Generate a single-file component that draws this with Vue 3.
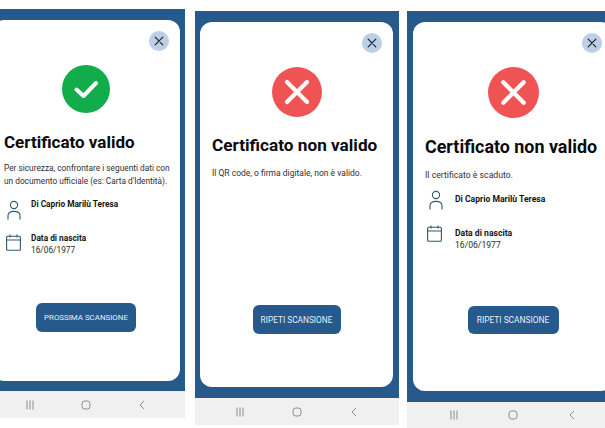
<script setup>
const person = { label: 'Di Caprio Marilù Teresa' }
const birth = { label: 'Data di nascita', value: '16/06/1977' }
const phones = [
  {
    id: 'p1', ok: true, title: 'Certificato valido',
    text: "Per sicurezza, confrontare i seguenti dati con un documento ufficiale (es: Carta d'Identità).",
    details: true, action: 'PROSSIMA SCANSIONE'
  },
  {
    id: 'p2', ok: false, title: 'Certificato non valido',
    text: 'Il QR code, o firma digitale, non è valido.',
    details: false, action: 'RIPETI SCANSIONE'
  },
  {
    id: 'p3', ok: false, title: 'Certificato non valido',
    text: 'Il certificato è scaduto.',
    details: true, action: 'RIPETI SCANSIONE'
  }
]
</script>

<template>
  <div class="gallery">
    <section v-for="p in phones" :key="p.id" class="phone" :class="p.id">
      <div class="screen">
        <div class="card">
          <button class="close" aria-label="Chiudi">
            <svg viewBox="0 0 20 20" width="20" height="20">
              <path d="M6.2 6.2 13.8 13.8M13.8 6.2 6.2 13.8" stroke="#1a2230" stroke-width="1.2" fill="none" stroke-linecap="round" />
            </svg>
          </button>
          <div class="status" :class="p.ok ? 'good' : 'bad'">
            <svg v-if="p.ok" viewBox="0 0 48 48" class="glyph">
              <path d="M14.5 24.5 21.5 31 34 18" stroke="#fff" stroke-width="4" fill="none" stroke-linecap="round" stroke-linejoin="round" />
            </svg>
            <svg v-else viewBox="0 0 50 50" class="glyph">
              <path d="M15 15 35 35M35 15 15 35" stroke="#fff" stroke-width="4.2" fill="none" stroke-linecap="round" />
            </svg>
          </div>
          <h1 class="title">{{ p.title }}</h1>
          <p class="text">{{ p.text }}</p>
          <div v-if="p.details" class="details">
            <div class="row">
              <svg class="icon" viewBox="0 0 14 20">
                <circle cx="7" cy="5" r="3.6" fill="none" stroke="#2f5a70" stroke-width="1.1" />
                <path d="M1 19.5V15.6C1 12.9 3.2 11.4 7 11.4s6 1.5 6 4.2v3.9" fill="none" stroke="#2f5a70" stroke-width="1.1" />
              </svg>
              <div class="info"><strong>{{ person.label }}</strong></div>
            </div>
            <div class="row">
              <svg class="icon" viewBox="0 0 15 17">
                <rect x="0.6" y="2.2" width="13.8" height="14" rx="1" fill="none" stroke="#2f5a70" stroke-width="1.1" />
                <path d="M.6 6H14.4M4 .4V3.6M11 .4V3.6" fill="none" stroke="#2f5a70" stroke-width="1.1" />
              </svg>
              <div class="info"><strong>{{ birth.label }}</strong><span>{{ birth.value }}</span></div>
            </div>
          </div>
          <button class="action">{{ p.action }}</button>
        </div>
      </div>
      <nav class="navbar">
        <svg class="nav" viewBox="0 0 12 12"><path d="M3 1.5V10.5M6 1.5V10.5M9 1.5V10.5" stroke="#8c8c8c" stroke-width="1" fill="none" /></svg>
        <svg class="nav" viewBox="0 0 12 12"><rect x="2" y="2" width="8" height="8" rx="2.8" stroke="#8c8c8c" stroke-width="1" fill="none" /></svg>
        <svg class="nav" viewBox="0 0 12 12"><path d="M8 2 4 6 8 10" stroke="#8c8c8c" stroke-width="1" fill="none" /></svg>
      </nav>
    </section>
  </div>
</template>

<style>
html, body { margin: 0; background: #fff; overflow: hidden; }
</style>

<style scoped>
.gallery {
  display: flex;
  align-items: flex-start;
  width: 605px;
  height: 428px;
  overflow: hidden;
  background: #fff;
  font-family: Roboto, "Liberation Sans", sans-serif;
  color: #1c1c1c;
}
.phone { flex: none; display: flex; flex-direction: column; }
.p1 { width: 198px; margin: 9px 0 0 -13px; }
.p2 { width: 204px; margin: 11px 0 0 10px; }
.p3 { width: 212px; margin: 11px 0 0 8px; }

.screen { background: #265a8c; padding: 11px 6px 11px; box-sizing: border-box; }
.p1 .screen { padding: 11px 5px 10px; }
.p2 .screen { padding: 11px 6px 11px 5px; }

.card {
  position: relative;
  display: flex;
  flex-direction: column;
  box-sizing: border-box;
  background: #fff;
  border-radius: 12px;
  padding: 45px 12px 0;
}
.p1 .card { height: 361px; padding: 45px 6px 49px 12px; }
.p2 .card { height: 365px; padding-bottom: 53px; }
.p3 .card { height: 369px; padding-bottom: 57px; }

.close {
  position: absolute;
  top: 11px;
  right: 11px;
  width: 20px;
  height: 20px;
  padding: 0;
  border: 0;
  border-radius: 50%;
  background: #bccfe6;
}
.close svg { display: block; }

.status {
  align-self: center;
  display: flex;
  border-radius: 50%;
  width: 50px;
  height: 50px;
}
.p1 .status { width: 48px; height: 48px; margin-left: -6px; }
.p3 .status { width: 51px; height: 51px; }
.good { background: #12ad4b; }
.bad { background: #f05354; }
.glyph { width: 100%; height: 100%; }

.title {
  margin: 17px 0 0;
  font-size: 17px;
  line-height: 24px;
  font-weight: 700;
  color: #0b0b0d;
  white-space: nowrap;
}
.p2 .title { margin-top: 16px; font-size: 17.2px; }
.p3 .title { font-size: 17.9px; }

.text {
  margin: 8px 0 0;
  font-size: 8.3px;
  line-height: 13px;
  color: #303030;
}
.p2 .text { margin-top: 10px; font-size: 8.5px; }
.p3 .text { margin-top: 10px; font-size: 8.7px; }

.details { display: flex; flex-direction: column; font-size: 8.3px; }
.p1 .details { margin-top: 10px; }
.p3 .details { margin-top: 11px; font-size: 8.6px; }
.row { display: flex; height: 34px; }
.icon { flex: none; display: block; }
.row:first-child .icon { width: 14px; height: 20px; margin: 2px 10px 0 3px; }
.row:last-child .icon { width: 15px; height: 17px; margin: 2px 10px 0 2px; }
.p3 .row:first-child .icon { margin: -3px 12px 0 4px; }
.p3 .row:last-child .icon { margin: -2px 13px 0 2px; }
.info { display: flex; flex-direction: column; line-height: 12px; }
.info strong { font-weight: 700; color: #141414; }
.info span { color: #2a2a2a; }

.action {
  align-self: center;
  margin-top: auto;
  height: 29px;
  padding: 0;
  border: 0;
  border-radius: 6px;
  background: #265a8c;
  color: #e8eef5;
  font-family: inherit;
  font-size: 8.1px;
  font-weight: 400;
}
.p1 .action { width: 100px; margin-left: -6px; font-size: 7.9px; }
.p2 .action { width: 88px; font-size: 8.3px; }
.p3 .action { width: 91px; height: 28px; font-size: 8.4px; }

.navbar { display: flex; justify-content: center; align-items: center; background: #f0f0f0; height: 27px; }
.p1 .navbar { gap: 44px; }
.p2 .navbar { gap: 45px; }
.p3 .navbar { gap: 47px; height: 30px; padding-bottom: 4px; box-sizing: border-box; }
.nav { width: 12px; height: 12px; flex: none; }
</style>
